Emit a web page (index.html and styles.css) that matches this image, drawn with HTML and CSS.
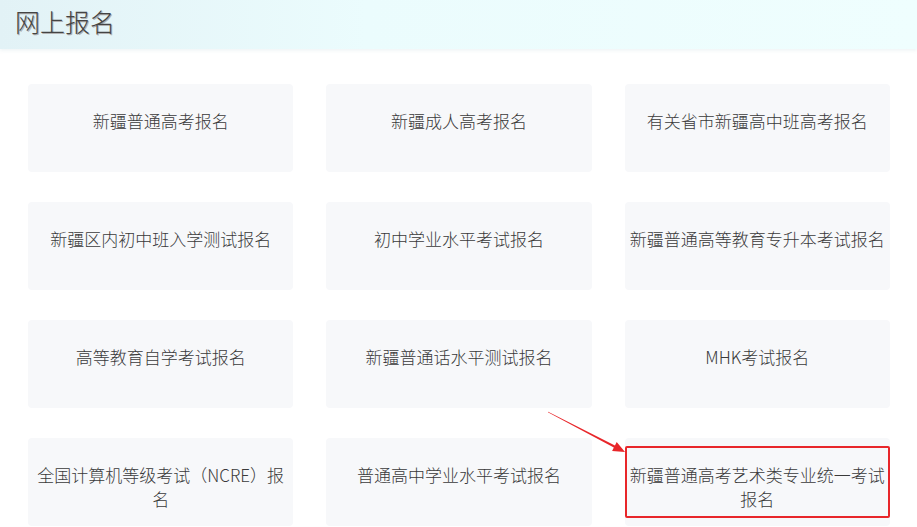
FILE: index.html
```html
<!DOCTYPE html>
<html lang="zh-CN">
<head>
    <meta charset="UTF-8">
    <meta name="viewport" content="width=device-width, initial-scale=1.0">
    <title>网上报名</title>
    <link rel="stylesheet" href="styles.css">
</head>
<body>
    <div class="header">
        <h1>网上报名</h1>
    </div>

    <div class="main">
        <div class="grid">
            <a class="item" href="#">新疆普通高考报名</a>
            <a class="item" href="#">新疆成人高考报名</a>
            <a class="item" href="#">有关省市新疆高中班高考报名</a>
            <a class="item" href="#">新疆区内初中班入学测试报名</a>
            <a class="item" href="#">初中学业水平考试报名</a>
            <a class="item" href="#">新疆普通高等教育专升本考试报名</a>
            <a class="item" href="#">高等教育自学考试报名</a>
            <a class="item" href="#">新疆普通话水平测试报名</a>
            <a class="item" href="#">MHK考试报名</a>
            <a class="item" href="#">全国计算机等级考试（NCRE）报名</a>
            <a class="item" href="#">普通高中学业水平考试报名</a>
            <a class="item marked" href="#">新疆普通高考艺术类专业统一考试报名</a>
        </div>

        <!-- annotation arrow pointing at the marked item -->
        <svg class="arrow" width="90" height="55" viewBox="0 0 90 55">
            <polygon points="7.9,7.3 8.1,6.7 74.95,40.44 76.7,37.1 85,47 72.1,45.9 73.85,42.56" fill="#e8262a"/>
        </svg>
    </div>
</body>
</html>
```

FILE: styles.css
```css
body {
    margin: 0;
    padding: 0;
    background: #fff;
    font-family: "Noto Sans CJK SC", "Noto Sans", sans-serif;
    color: #333;
}
.header {
    height: 49px;
    background: linear-gradient(to right, #e2f2f6, #ebfcfd 40%, #effefe);
    box-shadow: 0 2px 3px rgba(200, 220, 225, 0.25);
    padding-left: 15px;
}
.header h1 {
    margin: 0;
    font-size: 25px;
    font-weight: 300;
    line-height: 42px;
    color: #444;
    text-shadow: 1px 1px 0 #b0b0b0;
}
.main {
    position: relative;
    padding: 35px 27px 0 28px;
}
.grid {
    display: grid;
    grid-template-columns: repeat(3, 1fr);
    column-gap: 33px;
    row-gap: 30px;
}
.item {
    position: relative;
    display: block;
    box-sizing: border-box;
    height: 88px;
    padding: 25px 4px 0;
    background: #f7f8fa;
    border-radius: 4px;
    font-size: 17px;
    font-weight: 300;
    line-height: 24px;
    text-align: center;
    color: #3a3a3a;
    text-decoration: none;
}
.marked::after {
    content: "";
    position: absolute;
    left: 0;
    right: 0;
    top: 8px;
    bottom: 8px;
    border: 2px solid #e8262a;
    border-radius: 2px;
}
.arrow {
    position: absolute;
    left: 540px;
    top: 356px;
}
```
